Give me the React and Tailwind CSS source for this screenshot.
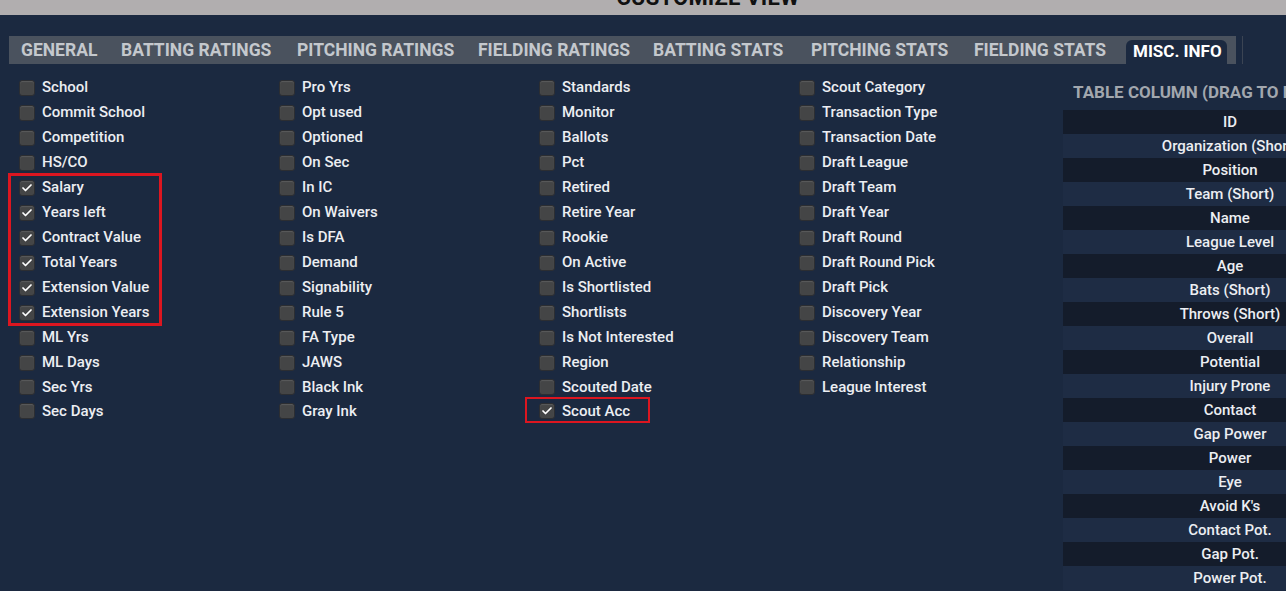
import { Check } from 'lucide-react';

const tabs = [
    { label: 'GENERAL', w: 'w-[100px]' },
    { label: 'BATTING RATINGS', w: 'w-[176px]' },
    { label: 'PITCHING RATINGS', w: 'w-[181px]' },
    { label: 'FIELDING RATINGS', w: 'w-[175px]' },
    { label: 'BATTING STATS', w: 'w-[158px]' },
    { label: 'PITCHING STATS', w: 'w-[163px]' },
    { label: 'FIELDING STATS', w: 'w-[152px]' },
];

const columns = [
    [
        ['School'], ['Commit School'], ['Competition'], ['HS/CO'],
        ['Salary', true], ['Years left', true], ['Contract Value', true], ['Total Years', true],
        ['Extension Value', true], ['Extension Years', true],
        ['ML Yrs'], ['ML Days'], ['Sec Yrs'], ['Sec Days'],
    ],
    [
        ['Pro Yrs'], ['Opt used'], ['Optioned'], ['On Sec'], ['In IC'], ['On Waivers'], ['Is DFA'],
        ['Demand'], ['Signability'], ['Rule 5'], ['FA Type'], ['JAWS'], ['Black Ink'], ['Gray Ink'],
    ],
    [
        ['Standards'], ['Monitor'], ['Ballots'], ['Pct'], ['Retired'], ['Retire Year'], ['Rookie'],
        ['On Active'], ['Is Shortlisted'], ['Shortlists'], ['Is Not Interested'], ['Region'],
        ['Scouted Date'], ['Scout Acc', true],
    ],
    [
        ['Scout Category'], ['Transaction Type'], ['Transaction Date'], ['Draft League'], ['Draft Team'],
        ['Draft Year'], ['Draft Round'], ['Draft Round Pick'], ['Draft Pick'], ['Discovery Year'],
        ['Discovery Team'], ['Relationship'], ['League Interest'],
    ],
];

const tableColumns = [
    'ID', 'Organization (Short)', 'Position', 'Team (Short)', 'Name', 'League Level', 'Age',
    'Bats (Short)', 'Throws (Short)', 'Overall', 'Potential', 'Injury Prone', 'Contact',
    'Gap Power', 'Power', 'Eye', "Avoid K's", 'Contact Pot.', 'Gap Pot.', 'Power Pot.',
];

function CheckRow({ label, checked, index }) {
    return (
        <div className={`flex items-center gap-[7px] ${index < 12 ? 'h-[25px]' : 'h-[24px]'}`}>
            <span className="w-4 h-4 rounded-[3px] bg-[#444546] border border-[#2c2e32] shadow-[inset_0_1px_1px_rgba(255,255,255,0.12)] flex items-center justify-center shrink-0">
                {checked && <Check className="w-[12px] h-[12px] text-white" strokeWidth={3.5} />}
            </span>
            <span className="text-[15px] font-medium text-[#eceef2] whitespace-nowrap">{label}</span>
        </div>
    );
}

export default function App() {
    return (
        <div className="w-[1286px] h-[591px] overflow-hidden bg-[#1b2940] font-['Roboto',sans-serif]">
            <div className="h-[15px] bg-[#b1aeaf] overflow-hidden flex justify-center">
                <div className="-mt-[12px] pl-[130px] text-[22px] leading-[20px] font-bold text-[#111] tracking-[0.2px]">
                    CUSTOMIZE VIEW
                </div>
            </div>

            <div className="flex items-center mt-[21px] pl-[9px]">
                <div className="h-[28px] w-[1227px] bg-[#4a525e] flex items-end pl-[12px]">
                    {tabs.map((t) => (
                        <div key={t.label} className={`${t.w} h-full flex items-center text-[17.5px] font-bold text-[#c4c8cd] whitespace-nowrap`}>
                            {t.label}
                        </div>
                    ))}
                    <div className="w-[101px] h-[24px] rounded-t-[6px] bg-[#1b2940] flex items-center pl-[7px] text-[17px] font-bold text-white whitespace-nowrap">
                        MISC. INFO
                    </div>
                </div>
                <div className="ml-[6px] w-px h-[28px] bg-[#3b4453]" />
            </div>

            <div className="flex mt-[11px]">
                <div className="flex pl-[19px] w-[1063px] shrink-0">
                    {columns.map((col, ci) => (
                        <div key={ci} className="relative w-[260px] shrink-0">
                            {col.map(([label, checked], i) => (
                                <CheckRow key={label} label={label} checked={checked} index={i} />
                            ))}
                            {ci === 0 && (
                                <span className="absolute left-[-11px] top-[98px] w-[154px] h-[153px] border-[3px] border-[#dc1620] pointer-events-none" />
                            )}
                            {ci === 2 && (
                                <span className="absolute left-[-14px] top-[322px] w-[125px] h-[26px] border-[2.5px] border-[#dc1620] pointer-events-none" />
                            )}
                        </div>
                    ))}
                </div>

                <div className="w-[334px] shrink-0">
                    <div className="h-[35px] flex items-center pl-[10px] text-[17px] font-bold text-[#a2a7ae] whitespace-nowrap">
                        TABLE COLUMN (DRAG TO REORDER)
                    </div>
                    {tableColumns.map((c, i) => (
                        <div
                            key={c}
                            className={`h-[24px] flex items-center justify-center text-[15px] font-medium text-[#eceef2] whitespace-nowrap ${i % 2 === 0 ? 'bg-[#141c2b]' : 'bg-[#1e2c44]'}`}
                        >
                            {c}
                        </div>
                    ))}
                </div>
            </div>
        </div>
    );
}
